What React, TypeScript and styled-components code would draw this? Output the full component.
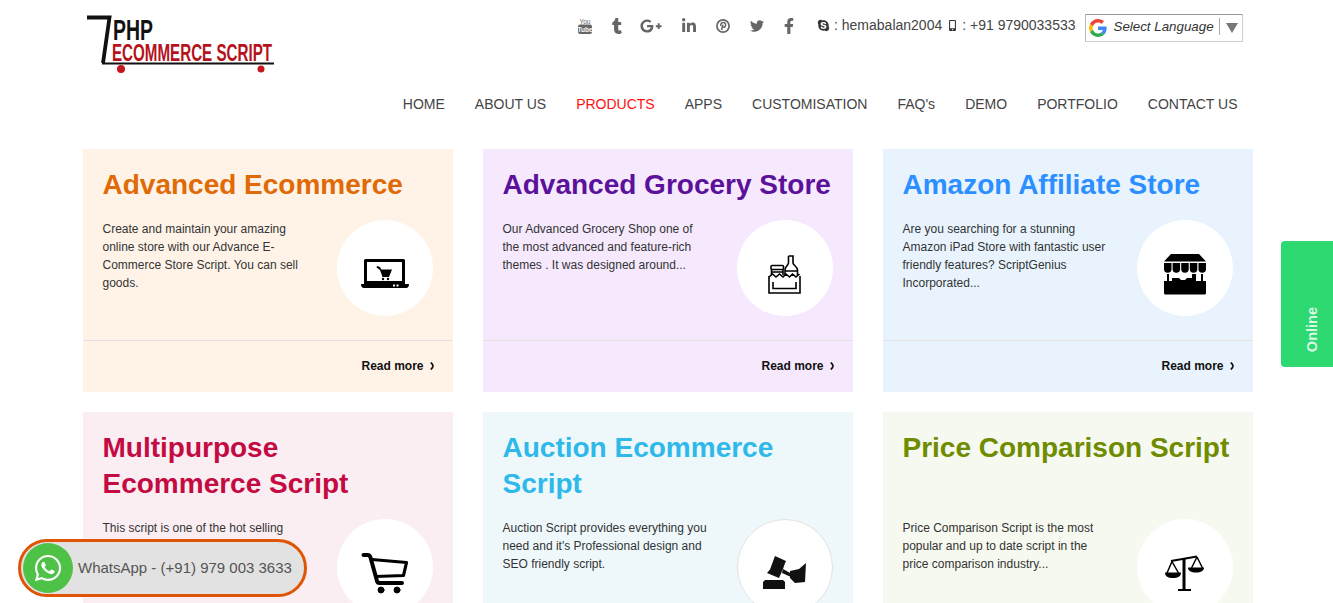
import React from 'react';
import styled, { createGlobalStyle } from 'styled-components';
import {
    FaFacebookF,
    FaGooglePlusG,
    FaLinkedinIn,
    FaMobileAlt,
    FaSkype,
    FaTumblr,
    FaTwitter,
    FaWhatsapp,
} from 'react-icons/fa';

const GlobalStyle = createGlobalStyle`
    html, body {
        margin: 0;
        height: 603px;
        overflow: hidden;
        background: #fff;
        font-family: "Liberation Sans", Arial, sans-serif;
    }
`;

const Page = styled.div`
    width: 1170px;
    margin-left: 82.5px;
`;
const Header = styled.header`
    display: flex;
    justify-content: space-between;
    height: 149px;
`;
const LogoBox = styled.a`
    display: block;
    margin: 14px 0 0 2.5px;
    width: 192px;
    height: 62px;
`;
const HeaderRight = styled.div`
    display: flex;
    flex-direction: column;
    align-items: flex-end;
`;
const TopBar = styled.div`
    display: flex;
    align-items: center;
    margin: 14px 10px 0 0;
    height: 27px;
`;
const Socials = styled.div`
    display: flex;
    align-items: center;
    gap: 20px;
    margin-right: 23.5px;
    padding-bottom: 3px;
    color: #666;
    svg {
        display: block;
        flex: none;
    }
`;
const TumblrIcon = styled(FaTumblr)`
    width: 10px;
    height: 16px;
`;
const GooglePlusIcon = styled(FaGooglePlusG)`
    width: 22px;
    height: 22px;
    margin-left: -2px;
`;
const LinkedinIcon = styled(FaLinkedinIn)`
    width: 14px;
    height: 16px;
`;
const TwitterIcon = styled(FaTwitter)`
    width: 14px;
    height: 14px;
`;
const FacebookIcon = styled(FaFacebookF)`
    width: 10px;
    height: 16px;
`;
const Contact = styled.span`
    display: flex;
    align-items: center;
    gap: 4px;
    margin-right: 9px;
    padding-bottom: 5px;
    font-size: 14px;
    color: #444;
    svg {
        color: #333;
    }
    &:first-of-type {
        margin-right: 5px;
    }
`;
const LangBox = styled.div`
    flex: none;
    display: flex;
    align-items: center;
    box-sizing: border-box;
    width: 158px;
    height: 28px;
    padding: 0 4px 0 3px;
    border: 1px solid #ccc;
    border-top-color: #999;
    border-left-color: #bbb;
    font-size: 13.33px;
    font-style: italic;
    color: #333;
    svg {
        flex: none;
    }
`;
const LangLabel = styled.span`
    flex: none;
    margin: 0 0 2px 7px;
    padding-right: 5px;
    line-height: 17px;
    white-space: nowrap;
    border-right: 1px solid #aaa;
`;
const LangArrow = styled.span`
    flex: none;
    margin-left: 6px;
    width: 0;
    height: 0;
    border-left: 6px solid transparent;
    border-right: 6px solid transparent;
    border-top: 10px solid #777;
`;
const Nav = styled.nav`
    display: flex;
    gap: 30px;
    margin: 54px 15px 0 0;
`;
const NavLink = styled.a<{ $active?: boolean }>`
    font-size: 14px;
    line-height: 18px;
    color: ${(p) => (p.$active ? '#f11' : '#444')};
`;

const CardGrid = styled.main`
    display: grid;
    grid-template-columns: repeat(3, 370px);
    gap: 20px 30px;
`;
const Card = styled.article<{ $bg: string }>`
    background: ${(p) => p.$bg};
`;
const CardTitle = styled.h2<{ $color: string; $lines: number }>`
    margin: 0;
    padding: 18px 20px 17px;
    min-height: ${(p) => p.$lines * 36}px;
    font-size: 28px;
    line-height: 36px;
    font-weight: bold;
    color: ${(p) => p.$color};
`;
const CardBody = styled.div`
    display: flex;
    justify-content: space-between;
    padding: 0 20px 24px;
`;
const CardText = styled.p`
    margin: 0;
    width: 208px;
    font-size: 12px;
    line-height: 18px;
    color: #333;
`;
const IconCircle = styled.div<{ $bordered?: boolean }>`
    flex: none;
    display: flex;
    align-items: center;
    justify-content: center;
    box-sizing: border-box;
    width: 96px;
    height: 96px;
    padding-top: 12px;
    border-radius: 50%;
    background: #fff;
    border: ${(p) => (p.$bordered ? '1px solid #e2e2e2' : 'none')};
`;
const CardFooter = styled.div`
    display: flex;
    align-items: center;
    justify-content: flex-end;
    gap: 6px;
    height: 49px;
    padding: 0 19px 2px 0;
    border-top: 1px solid #e3e1e1;
    font-size: 12px;
    font-weight: bold;
    color: #111;
`;

const WhatsAppPill = styled.a`
    position: fixed;
    left: 18px;
    top: 539px;
    display: flex;
    align-items: center;
    box-sizing: border-box;
    width: 289px;
    height: 58px;
    padding-left: 2px;
    border: 3px solid #e05405;
    border-radius: 29px;
    background: #e2e2e2;
    font-size: 15px;
    white-space: nowrap;
    color: #555;
`;
const WhatsAppBadge = styled.span`
    flex: none;
    display: flex;
    align-items: center;
    justify-content: center;
    width: 50px;
    height: 50px;
    margin-right: 5px;
    border-radius: 50%;
    background: #4dc247;
    color: #fff;
`;
const WhatsAppText = styled.span`
    margin-bottom: 2px;
`;
const OnlineTab = styled.div`
    position: fixed;
    left: 1281px;
    top: 241px;
    display: flex;
    align-items: center;
    justify-content: flex-end;
    flex-direction: column;
    box-sizing: border-box;
    width: 52px;
    height: 126px;
    padding-bottom: 15px;
    border-radius: 4px 0 0 4px;
    background: #2ed971;
    color: #d8f8e4;
    font-size: 14.5px;
    font-weight: bold;
`;
const OnlineLabel = styled.span`
    writing-mode: vertical-rl;
    transform: rotate(180deg);
    margin-left: 10px;
`;

const Logo = () => (
    <svg width="192" height="62" viewBox="0 0 192 62">
        <path d="M2 3.500h22.500L18 49" fill="none" stroke="#111" strokeWidth="3.800" />
        <path d="M17 49.500h172" stroke="#111" strokeWidth="2" />
        <circle cx="36" cy="55" r="4" fill="#c4161c" />
        <circle cx="176" cy="55" r="3.500" fill="#c4161c" />
        <text x="28" y="26" fontFamily="'Liberation Sans Narrow', 'Liberation Sans'" fontWeight="bold" fontSize="30" textLength="40" lengthAdjust="spacingAndGlyphs" fill="#111">PHP</text>
        <text x="27" y="47" fontFamily="'Liberation Sans Narrow', 'Liberation Sans'" fontWeight="bold" fontSize="23" textLength="160" lengthAdjust="spacingAndGlyphs" fill="#b5121b">ECOMMERCE SCRIPT</text>
    </svg>
);

const YoutubeIcon = () => (
    <svg width="14" height="16" viewBox="0 0 14 16">
        <text x="7" y="5.500" textAnchor="middle" fontFamily="'Liberation Sans Narrow', 'Liberation Sans'" fontSize="6.500" fill="#666">You</text>
        <rect y="6.500" width="14" height="9.500" rx="2" fill="#666" />
        <text x="7" y="14" textAnchor="middle" fontFamily="'Liberation Sans Narrow', 'Liberation Sans'" fontWeight="bold" fontSize="6.500" fill="#fff">Tube</text>
    </svg>
);

const PinterestIcon = () => (
    <svg width="14" height="14" viewBox="0 0 14 14">
        <circle cx="7" cy="7" r="6.100" fill="none" stroke="#666" strokeWidth="1.700" />
        <path d="M5.600 11l1.300-5.400M4.900 6.900C4.200 4.900 5.600 3.500 7.200 3.500c1.700 0 2.700 1.100 2.400 2.800C9.300 8 8 8.800 6.500 8" fill="none" stroke="#666" strokeWidth="1.500" />
    </svg>
);

const GoogleG = () => (
    <svg width="18" height="18" viewBox="0 0 48 48">
        <path fill="#EA4335" d="M24 9.500c3.500 0 6.700 1.300 9.100 3.500l6.800-6.800C35.800 2.400 30.300 0 24 0 14.600 0 6.500 5.400 2.600 13.200l7.900 6.200C12.400 13.700 17.700 9.500 24 9.500z" />
        <path fill="#4285F4" d="M47 24.500c0-1.600-.1-3.100-.4-4.500H24v9h12.900c-.6 3-2.300 5.500-4.800 7.200l7.700 6C44.300 38 47 31.800 47 24.500z" />
        <path fill="#FBBC05" d="M10.500 28.600C10 27.200 9.800 25.600 9.800 24s.3-3.200.7-4.600l-7.900-6.200C.9 16.500 0 20.100 0 24s.9 7.500 2.600 10.800l7.900-6.200z" />
        <path fill="#34A853" d="M24 48c6.500 0 11.900-2.100 15.800-5.800l-7.700-6c-2.100 1.400-4.900 2.300-8.100 2.300-6.300 0-11.600-4.200-13.500-9.900l-7.900 6.200C6.500 42.600 14.600 48 24 48z" />
    </svg>
);

const LaptopCartIcon = () => (
    <svg width="48" height="30" viewBox="0 0 48 30">
        <path d="M3 1.500A1.500 1.500 0 0 1 4.500 0h38A1.500 1.500 0 0 1 44 1.500V26H3zM6 3v19h35V3z" fill="#000" fillRule="evenodd" />
        <path d="M0 25h48c0 2.500-1 4-3 4H3C1 29 0 27.500 0 25z" fill="#000" />
        <rect x="32" y="25.500" width="2" height="2" fill="#fff" />
        <rect x="35.500" y="25.500" width="2" height="2" fill="#fff" />
        <path d="M16 7l3 1 1.200 2.500H31l-3 7.500H21.500L19 11l-3.500-2.500z" fill="#000" />
        <circle cx="22" cy="20" r="1.200" fill="#000" />
        <circle cx="27" cy="20" r="1.200" fill="#000" />
    </svg>
);

const GroceryIcon = () => (
    <svg width="33" height="39" viewBox="0 0 33 39" fill="none" stroke="#000" strokeWidth="1.600">
        <path d="M1 21v17h31V21" />
        <path d="M1 22l3.500-3 3.500 3 3.500-3 3.500 3 3-3 3.500 3 3-3 3.500 3 3.500-3" />
        <path d="M5 27v6.500h23V27" />
        <rect x="3" y="10.500" width="12.500" height="4" rx="1" />
        <path d="M3.500 14.500V20M15 14.500V20M3.500 17h11.500" />
        <path d="M20.500 1h4.500v7c0 2 4.500 3.500 4.500 7v6M20.500 1v7c0 2-3.500 3.500-3.500 7v6M17 16h12.500" />
    </svg>
);

const StoreIcon = () => (
    <svg width="42" height="41" viewBox="0 0 42 41" fill="#000">
        <path d="M7 0h28l7 7.500H0z" />
        <path d="M0 9h7.500v6a3.700 3.700 0 0 1-7.500 0zM8.600 9h7.500v6a3.700 3.700 0 0 1-7.500 0zM17.200 9h7.500v6a3.700 3.700 0 0 1-7.500 0zM25.800 9h7.500v6a3.700 3.700 0 0 1-7.500 0zM34.500 9H42v6a3.700 3.700 0 0 1-7.500 0z" />
        <path d="M3 20h2v7H3zM37 20h2v7h-2z" />
        <path d="M8 27v-3h7l2 2h4l2-2h5v-4h4v7z" />
        <path d="M0 27h42v12a1.500 1.500 0 0 1-1.500 1.500h-39A1.500 1.500 0 0 1 0 39z" />
    </svg>
);

const BigCartIcon = () => (
    <svg width="48" height="42" viewBox="0 0 48 42" fill="none" stroke="#000" strokeLinecap="round" strokeLinejoin="round">
        <path d="M2.500 3H6.500c1.500 0 2.500.7 3 2.500L16 29c.3 1.300 1 2 2.500 2H41" strokeWidth="4" />
        <path d="M11 7.500l34.500 3-3 13-28 1" strokeWidth="3.200" />
        <circle cx="20" cy="38" r="3" fill="#000" strokeWidth="1" />
        <circle cx="36" cy="38" r="3" fill="#000" strokeWidth="1" />
    </svg>
);

const GavelIcon = () => (
    <svg width="44" height="34" viewBox="0 0 44 34" fill="#111">
        <path d="M12 0l11 5-1.500 3.500L20 13l-4 9-12-5 3-3.500z" />
        <path d="M20 13l9 5-1 3-9-4z" />
        <path d="M27 15l9-2 7-6-1 19-10 1-5-5z" />
        <path d="M2 24h18l2 2v7H0v-7z" />
    </svg>
);

const ScalesIcon = () => (
    <svg width="40" height="37" viewBox="0 0 40 37">
        <path d="M17.500 4h3v30h-3zM13 34h13v2h-13z" fill="#000" />
        <path d="M6 6l26-4.500" stroke="#000" strokeWidth="2.200" />
        <path d="M7 6.500L2 18M7 6.500l6.500 11.500M32 2l-5.500 11M32 2l5.500 11" stroke="#000" strokeWidth="1.500" fill="none" />
        <path d="M0 17.500h16c0 4-3 5.500-8 5.500s-8-1.500-8-5.500zM23 12.500h16c0 3.500-3 5-8 5s-8-1.500-8-5z" fill="#000" />
    </svg>
);

const Chevron = () => (
    <svg width="4" height="8" viewBox="0 0 4 8">
        <path d="M.8.500C2.600 2 3 3 3 4s-.4 2-2.200 3.500" fill="none" stroke="#111" strokeWidth="1.700" />
    </svg>
);

type CardData = {
    title: string;
    color: string;
    bg: string;
    lines: number;
    text: string;
    icon: React.ReactNode;
    bordered?: boolean;
};

const cards: CardData[] = [
    {
        title: 'Advanced Ecommerce',
        color: '#e06a05',
        bg: '#fff3e8',
        lines: 1,
        text: 'Create and maintain your amazing online store with our Advance E-Commerce Store Script. You can sell goods.',
        icon: <LaptopCartIcon />,
    },
    {
        title: 'Advanced Grocery Store',
        color: '#5b1199',
        bg: '#f6e9fe',
        lines: 1,
        text: 'Our Advanced Grocery Shop one of the most advanced and feature-rich themes . It was designed around...',
        icon: <GroceryIcon />,
    },
    {
        title: 'Amazon Affiliate Store',
        color: '#2b8fff',
        bg: '#e8f3fe',
        lines: 1,
        text: 'Are you searching for a stunning Amazon iPad Store with fantastic user friendly features? ScriptGenius Incorporated...',
        icon: <StoreIcon />,
    },
    {
        title: 'Multipurpose Ecommerce Script',
        color: '#c30a42',
        bg: '#fbeef3',
        lines: 2,
        text: 'This script is one of the hot selling script in the market which has features.',
        icon: <BigCartIcon />,
    },
    {
        title: 'Auction Ecommerce Script',
        color: '#2fb9ea',
        bg: '#eef8fb',
        lines: 2,
        text: "Auction Script provides everything you need and it's Professional design and SEO friendly script.",
        icon: <GavelIcon />,
        bordered: true,
    },
    {
        title: 'Price Comparison Script',
        color: '#6f8c00',
        bg: '#f6f9ef',
        lines: 2,
        text: 'Price Comparison Script is the most popular and up to date script in the price comparison industry...',
        icon: <ScalesIcon />,
    },
];

const navItems = ['HOME', 'ABOUT US', 'PRODUCTS', 'APPS', 'CUSTOMISATION', "FAQ's", 'DEMO', 'PORTFOLIO', 'CONTACT US'];

export default function App() {
    return (
        <>
            <GlobalStyle />
            <Page>
                <Header>
                    <LogoBox>
                        <Logo />
                    </LogoBox>
                    <HeaderRight>
                        <TopBar>
                            <Socials>
                                <YoutubeIcon />
                                <TumblrIcon />
                                <GooglePlusIcon />
                                <LinkedinIcon />
                                <PinterestIcon />
                                <TwitterIcon />
                                <FacebookIcon />
                            </Socials>
                            <Contact>
                                <FaSkype size={13} /> : hemabalan2004
                            </Contact>
                            <Contact>
                                <FaMobileAlt size={11} /> : +91 9790033533
                            </Contact>
                            <LangBox>
                                <GoogleG />
                                <LangLabel>Select Language</LangLabel>
                                <LangArrow />
                            </LangBox>
                        </TopBar>
                        <Nav>
                            {navItems.map((item) => (
                                <NavLink key={item} $active={item === 'PRODUCTS'}>
                                    {item}
                                </NavLink>
                            ))}
                        </Nav>
                    </HeaderRight>
                </Header>
                <CardGrid>
                    {cards.map((card) => (
                        <Card key={card.title} $bg={card.bg}>
                            <CardTitle $color={card.color} $lines={card.lines}>
                                {card.title}
                            </CardTitle>
                            <CardBody>
                                <CardText>{card.text}</CardText>
                                <IconCircle $bordered={card.bordered}>{card.icon}</IconCircle>
                            </CardBody>
                            <CardFooter>
                                Read more <Chevron />
                            </CardFooter>
                        </Card>
                    ))}
                </CardGrid>
            </Page>
            <WhatsAppPill>
                <WhatsAppBadge>
                    <FaWhatsapp size={30} />
                </WhatsAppBadge>
                <WhatsAppText>WhatsApp - (+91) 979 003 3633</WhatsAppText>
            </WhatsAppPill>
            <OnlineTab>
                <OnlineLabel>Online</OnlineLabel>
            </OnlineTab>
        </>
    );
}
